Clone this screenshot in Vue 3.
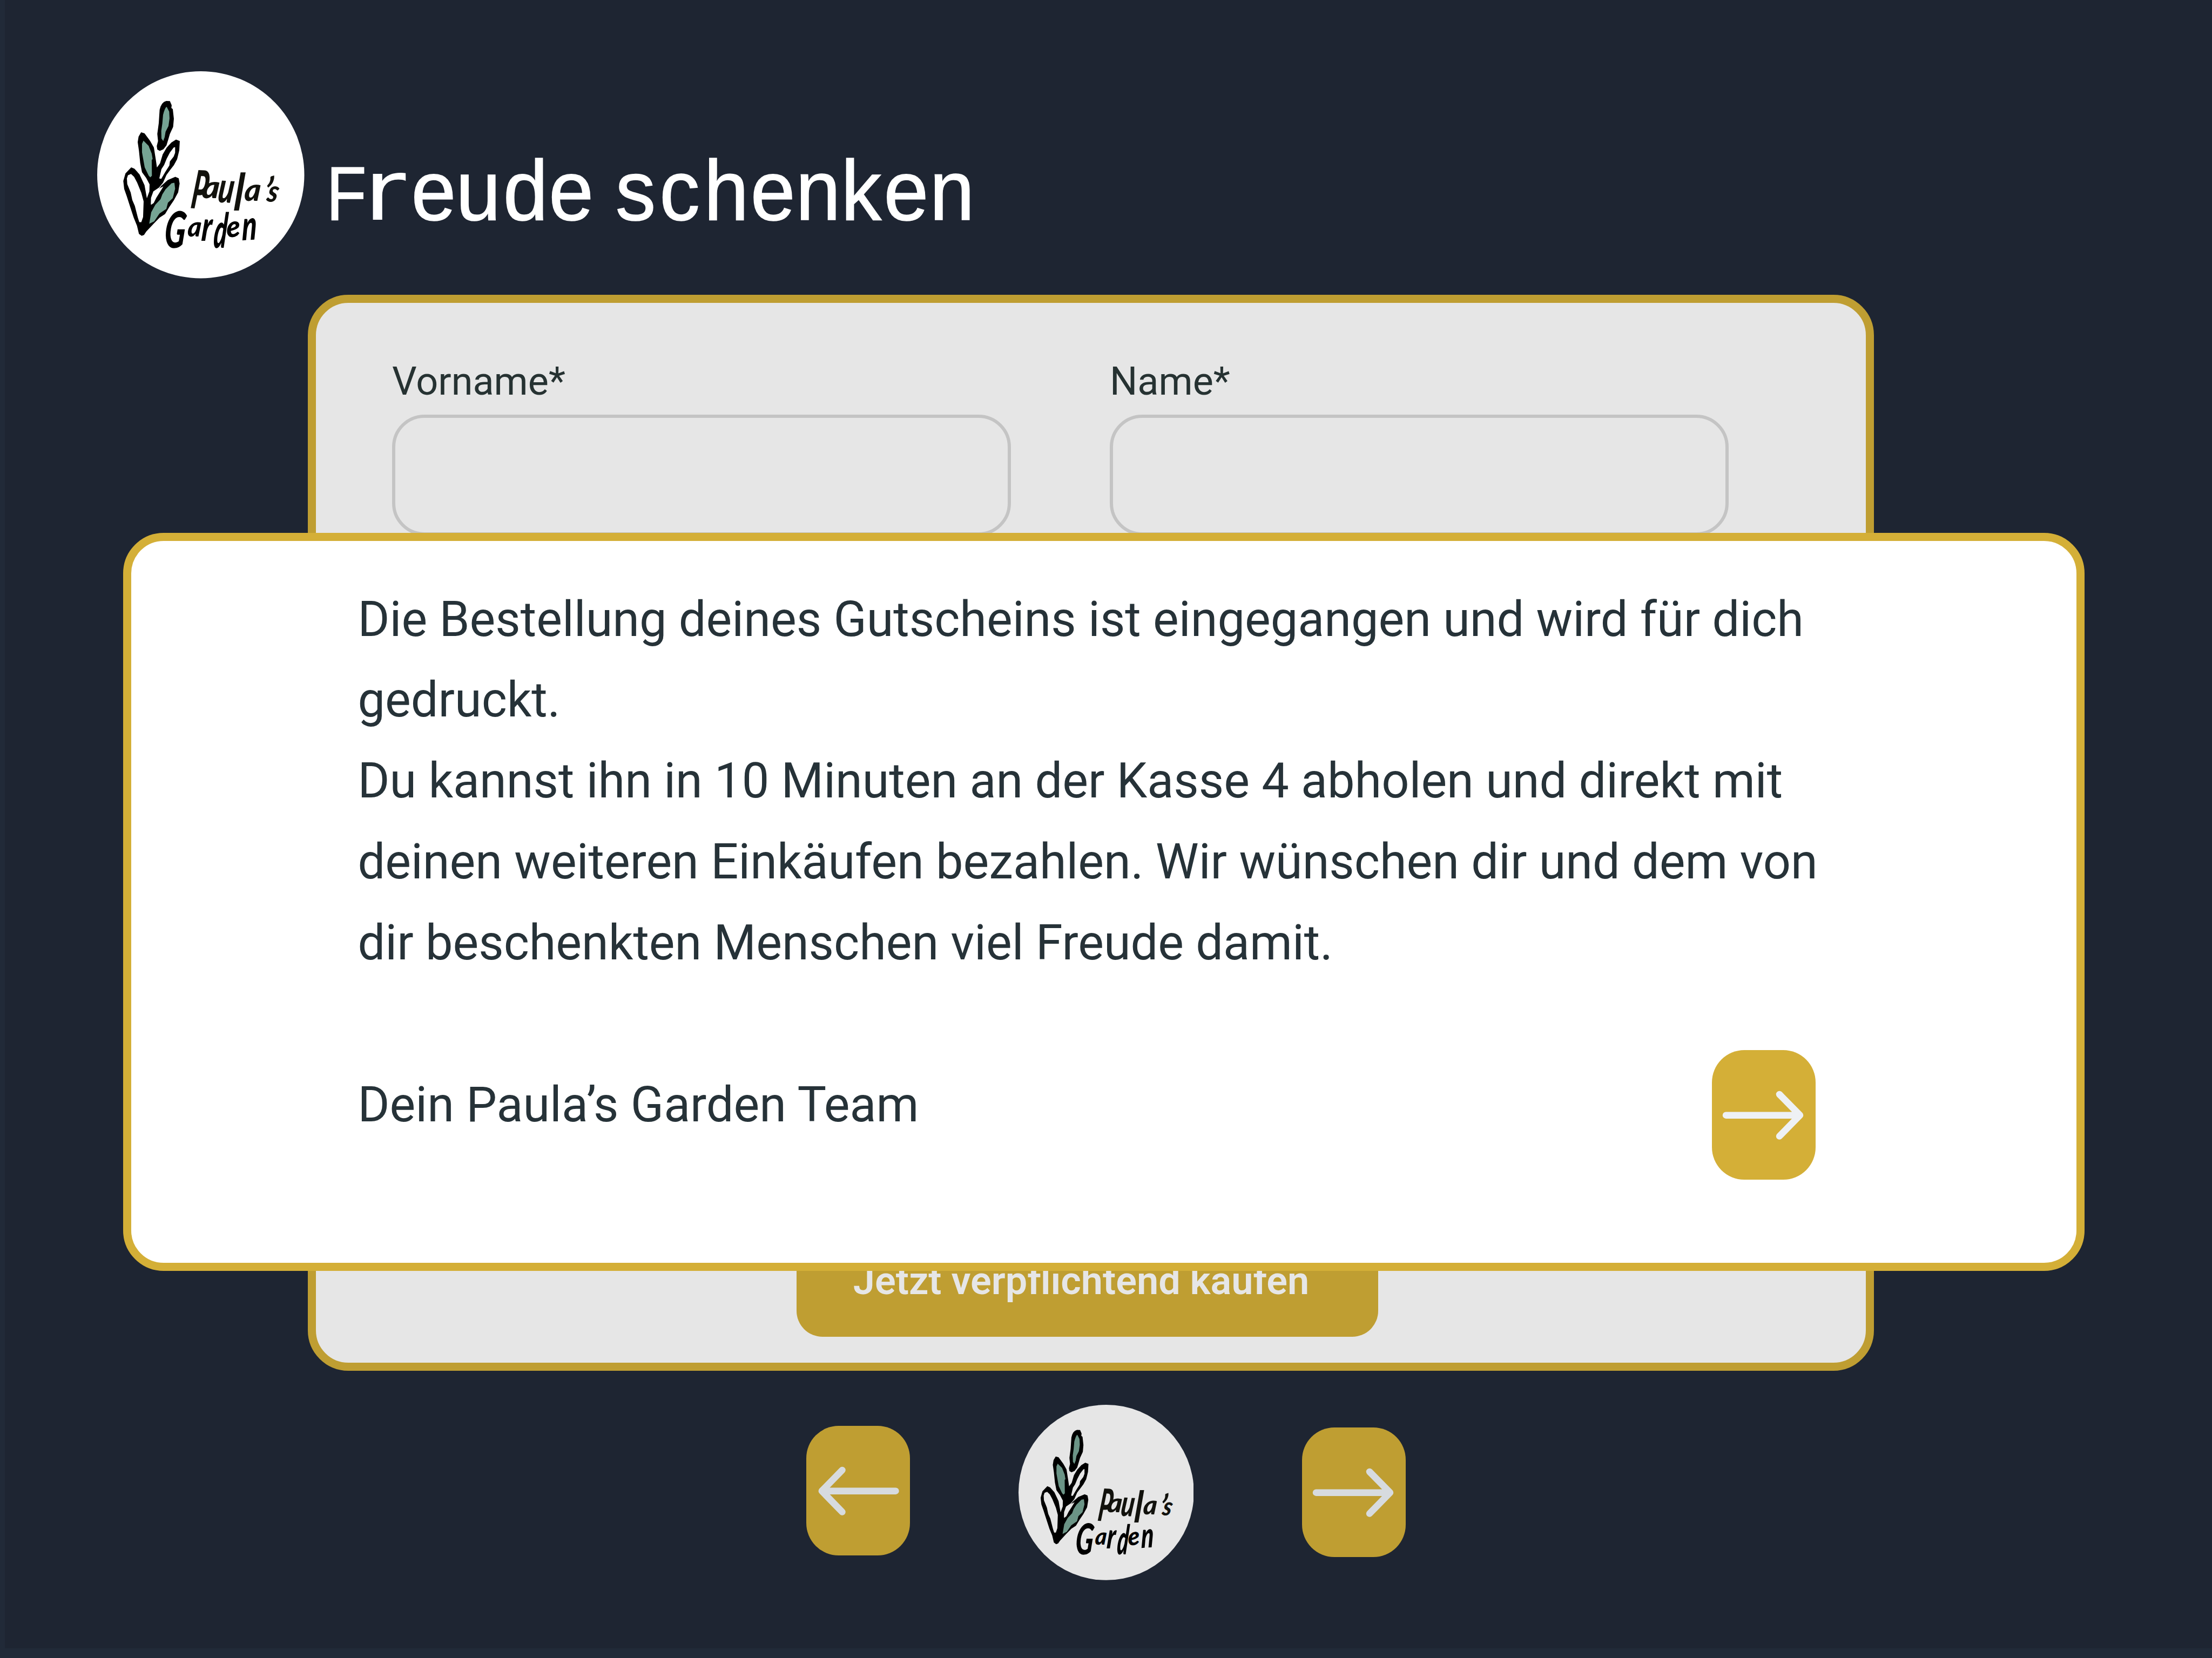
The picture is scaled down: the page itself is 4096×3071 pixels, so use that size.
<script setup>
import { h } from 'vue'

const message = [
  'Die Bestellung deines Gutscheins ist eingegangen und wird für dich',
  'gedruckt.',
  'Du kannst ihn in 10 Minuten an der Kasse 4 abholen und direkt mit',
  'deinen weiteren Einkäufen bezahlen. Wir wünschen dir und dem von',
  'dir beschenkten Menschen viel Freude damit.',
]

// Left edge of every glyph in the condensed part of the heading
const titleStops = [761.5, 844.5, 932, 1016.5, 1095, 1140, 1221.5, 1304, 1390, 1474, 1558, 1637, 1722]
  .map((x) => (x / 0.95).toFixed(1)).join(' ')

// [glyph, x, baseline, size, horizontal scale, rotation]
const paula = [
  ['P', 545, 797, 295, 0.5, 3], ['a', 608, 742, 172, 1.1, 0], ['u', 695, 764, 235, 0.68, 3],
  ['l', 786, 810, 285, 0.72, 0], ['a', 845, 755, 172, 1.0, 0], ['’', 938, 790, 240, 0.7, 8], ['s', 968, 758, 170, 0.85, 8],
]
const garden = [
  ['G', 398, 1018, 280, 0.62, 0], ['a', 530, 953, 152, 0.95, 0], ['r', 606, 977, 230, 0.68, 0],
  ['d', 672, 1016, 268, 0.5, 0], ['e', 750, 962, 162, 0.98, -8], ['n', 834, 976, 228, 0.66, -4],
]

const leafOutlines = [
  'M414 201 L434 202 L444 225 L442 240 L450 246 L456 300 L452 345 L434 384 L426 412 L415 448 L398 470 L378 479 L364 471 L361 452 L368 424 L364 384 L372 325 L377 250 Q386 207 414 201 Z',
  'M274 375 L293 381 L324 423 L345 460 L356 530 L362 571 L379 548 L394 498 L416 461 L442 432 L468 416 L489 424 L486 476 L474 525 L456 558 L436 584 L415 612 L396 655 L374 682 L342 704 L329 740 L328 777 L343 757 L356 715 L386 673 L422 641 L464 623 L483 631 L488 660 L480 709 L456 753 L431 790 L407 830 L377 849 L342 885 L303 927 L290 946 L277 951 L262 940 L251 894 L233 850 L214 792 L194 730 L180 690 L175 646 L187 604 L219 570 L237 578 L265 609 L293 669 L306 742 L320 704 L321 665 L302 629 L279 597 L269 546 L262 478 L255 430 L260 399 Z',
]
const leafFills = [
  ['M416 233 Q406 238 396 278 L392 326 L386 368 L387 410 L397 424 L405 402 L410 372 L426 341 L432 298 L430 260 Z', 'green'],
  ['M287 422 L279 440 L279 487 L288 537 L294 570 L316 616 L325 626 L334 617 L333 529 L338 524 L333 494 L319 459 L316 451 Z', 'green'],
  ['M463 458 L455 460 L434 488 L416 522 L402 557 L387 580 L375 632 L386 634 L407 598 L431 560 L434 537 L455 510 L463 489 Z', 'plain'],
  ['M218 607 L201 614 L195 632 L197 663 L216 710 L225 752 L239 784 L256 850 L264 875 L275 875 L285 846 L288 759 L275 711 L252 655 L235 623 Z', 'plain'],
  ['M398 676 Q360 689 341 735 L329 779 L344 768 L359 738 L377 710 Z', 'plain'],
  ['M459 656 L443 659 L410 692 L392 720 L382 747 L353 778 L330 820 L319 884 L347 870 L376 827 L414 801 L423 767 L450 741 L463 689 Z', 'green'],
]

const letters = (list) => list.map(([c, x, y, size, s, r]) =>
  h('text', { 'font-size': size, transform: `translate(${x} ${y}) rotate(${r}) skewX(-5) scale(${s} 1)` }, c))

const Logo = () => h('svg', { viewBox: '30 36 1151 1151', 'aria-label': 'Paula’s Garden' }, [
  h('circle', { cx: 605.5, cy: 611.5, r: 575.5, fill: 'var(--paper)' }),
  ...leafOutlines.map((d) => h('path', { d })),
  ...leafFills.map(([d, kind]) => h('path', { d, fill: kind === 'green' ? 'var(--leaf)' : 'var(--paper)' })),
  h('g', { fill: '#12120d', 'font-family': 'Lato, sans-serif', 'font-style': 'italic', 'font-weight': 900 }, letters(paula)),
  h('g', { fill: '#000', 'font-family': 'Lato, sans-serif', 'font-style': 'italic', 'font-weight': 900 }, letters(garden)),
])

const Arrow = (props) => h('svg', { viewBox: '0 0 192 240' }, [
  h('path', {
    d: props.back
      ? 'M165.5 120.7H28.8M66.5 82L28.8 120.7L66.5 159.5'
      : 'M26 120.7H163M125 82L163 120.7L125 159.5',
    fill: 'none', stroke: 'currentColor', 'stroke-width': 12.5, 'stroke-linecap': 'round', 'stroke-linejoin': 'round',
  }),
])
Arrow.props = { back: Boolean }
</script>

<template>
  <div class="page">
    <header class="header">
      <Logo class="brand" />
      <svg class="title" viewBox="590 220 1240 260" role="heading" aria-label="Freude schenken">
        <text font-size="141" transform="translate(604.5 407.5) scale(0.86 1)">F</text>
        <text class="hook" font-size="155" transform="translate(673.5 407.5) scale(1.22 1)">r</text>
        <text font-size="157" transform="translate(0 407.5) scale(0.95 1)" :x="titleStops">eude schenken</text>
      </svg>
    </header>

    <main class="card">
      <div class="fields">
        <label class="field">Vorname*<span class="input"></span></label>
        <label class="field">Name*<span class="input"></span></label>
      </div>
      <button class="buy">Jetzt verpflichtend kaufen</button>
    </main>

    <nav class="nav">
      <button class="tile"><Arrow back /></button>
      <Logo class="home" />
      <button class="tile next"><Arrow /></button>
    </nav>

    <section class="dialog">
      <div class="message">
        <p v-for="line in message" :key="line">{{ line }}</p>
      </div>
      <footer class="foot">
        <p>Dein Paula’s Garden Team</p>
        <button class="tile bright"><Arrow /></button>
      </footer>
    </section>
  </div>
</template>

<style>
body { margin: 0; background: #1e2532; }
</style>

<style scoped>
.page {
  position: relative;
  display: flex;
  flex-direction: column;
  box-sizing: border-box;
  width: 4096px;
  height: 3071px;
  overflow: hidden;
  background: #1e2532;
  border: 0 solid #212a38;
  border-left-width: 9px;
  border-bottom-width: 18px;
  font-family: Roboto, sans-serif;
  color: #263238;
}
p { margin: 0; }
button { border: 0; padding: 0; font-family: inherit; }
svg { display: block; }

.header {
  display: flex;
  align-items: flex-start;
  height: 545.7px;
  padding: 132px 0 0 171px;
  box-sizing: border-box;
  flex: none;
}
.brand {
  --paper: #fff;
  --leaf: #76a494;
  width: 383.5px;
  height: 383.5px;
}
.title {
  width: 1239.4px;
  height: 259.9px;
  margin: 88px 0 0 26px;
  fill: #fff;
  stroke: #fff;
  stroke-width: 1.6px;
  font-family: "Liberation Sans", sans-serif;
}
.hook { font-family: "DejaVu Sans", sans-serif; stroke: none; }

.card {
  display: flex;
  flex-direction: column;
  justify-content: space-between;
  align-items: center;
  flex: none;
  box-sizing: border-box;
  width: 2900px;
  height: 1993.5px;
  margin-left: 561px;
  padding: 110px 0 48px;
  border: 15px solid #bf9e32;
  border-radius: 75px;
  background: #e6e6e6;
}
.fields {
  display: flex;
  gap: 183.5px;
  align-self: flex-start;
  padding-left: 141px;
}
.field {
  display: flex;
  flex-direction: column;
  width: 1145.5px;
  font-size: 72px;
  line-height: 72px;
  color: #263232;
}
.input {
  box-sizing: border-box;
  height: 224px;
  margin-top: 25px;
  border: 6px solid #c4c4c4;
  border-radius: 60px;
}
.buy {
  box-sizing: border-box;
  width: 1077px;
  height: 200px;
  margin-right: 14px;
  border-radius: 48px;
  background: #bf9e32;
  color: #e6e6e6;
  font-size: 72px;
  font-weight: 600;
  line-height: 72px;
  padding: 0 22px 6px 0;
}

.nav {
  display: flex;
  justify-content: center;
  align-items: center;
  flex: none;
  gap: 200.5px;
  height: 324.8px;
  margin: 63px 9px 0 0;
}
.home {
  --paper: #e6e6e6;
  --leaf: #6b9486;
  width: 324.8px;
  height: 324.8px;
}
.tile {
  flex: none;
  width: 192px;
  height: 239.5px;
  border-radius: 60px;
  background: #bf9e32;
  color: #d7dbdf;
}
.tile svg { width: 192px; height: 240px; }
.nav .tile { margin-top: -7px; }
.nav .next { margin-top: -1px; }

.dialog {
  position: absolute;
  left: 219px;
  top: 986.5px;
  box-sizing: border-box;
  width: 3632px;
  height: 1367.5px;
  padding: 71px 483.5px 0 419.5px;
  border: 15px solid #d4af37;
  border-radius: 75px;
  background: #fff;
  font-size: 90px;
  line-height: 149.95px;
  white-space: nowrap;
}
.foot {
  display: flex;
  justify-content: space-between;
  align-items: flex-start;
  padding-top: 150px;
}
.bright {
  margin-top: -27px;
  background: #d4af37;
  color: #eef1f4;
}
</style>
